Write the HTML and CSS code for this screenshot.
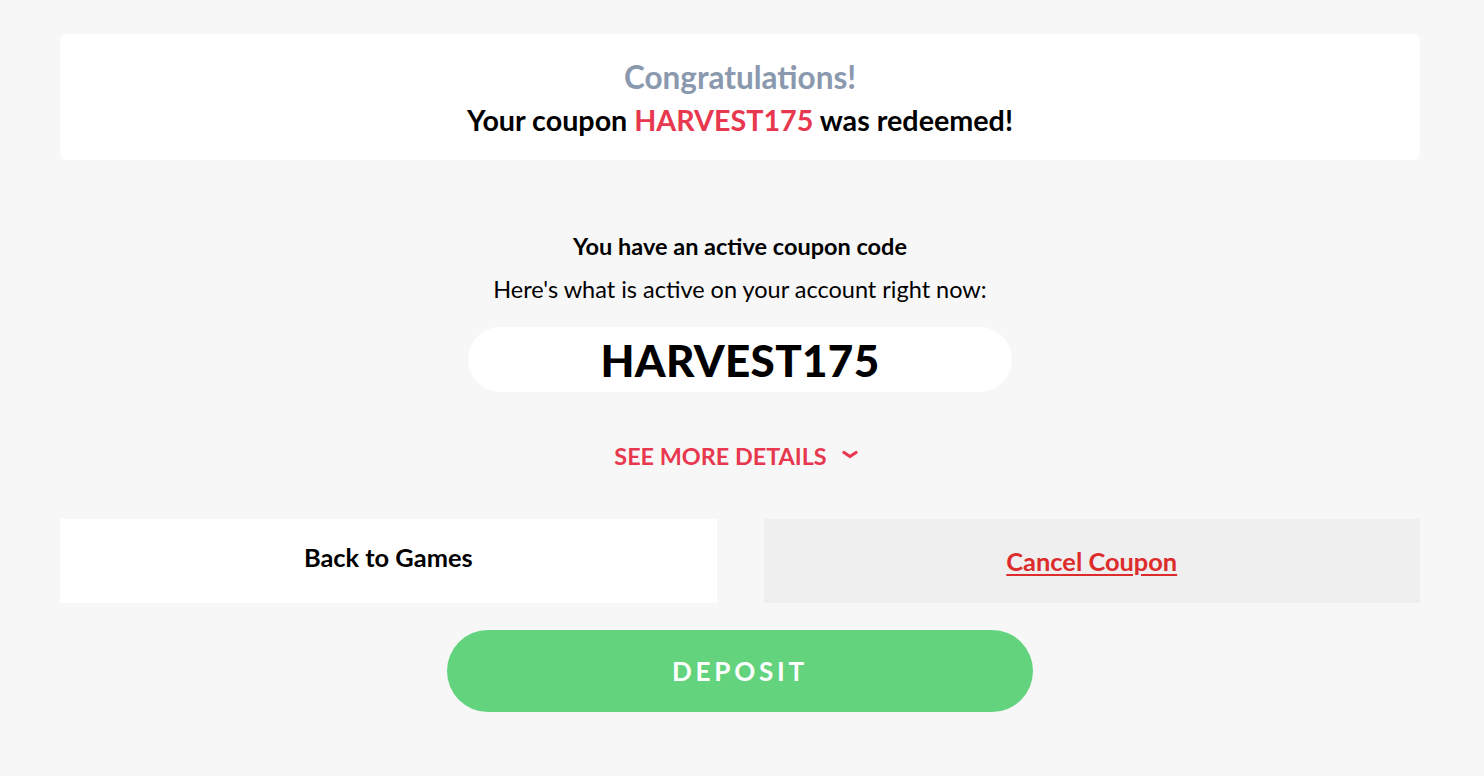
FILE: index.html
```html
<!DOCTYPE html>
<html>
<head>
<meta charset="utf-8">
<link rel="stylesheet" href="styles.css">
</head>
<body>
<div class="page">
  <div class="banner">
    <div class="congrats">Congratulations!</div>
    <div class="redeemed">Your coupon <span class="code-red">HARVEST175</span> was redeemed!</div>
  </div>
  <div class="active">
    <div class="active-title">You have an active coupon code</div>
    <div class="active-sub">Here's what is active on your account right now:</div>
    <div class="pill">HARVEST175</div>
    <div class="details">SEE MORE DETAILS
      <svg class="chev" width="16" height="10" viewBox="0 0 16 10"><path d="M2 2.5 L8 6.5 L14 2.5" fill="none" stroke="#e8384f" stroke-width="3.2" stroke-linecap="round" stroke-linejoin="round"/></svg>
    </div>
  </div>
  <div class="actions">
    <div class="btn back">Back to Games</div>
    <div class="btn cancel"><a href="#">Cancel Coupon</a></div>
  </div>
  <div class="deposit-row">
    <div class="deposit">DEPOSIT</div>
  </div>
</div>
</body>
</html>
```
FILE: styles.css
```css
html, body {
  margin: 0;
  padding: 0;
  background: #f7f7f7;
  font-family: Lato, "Liberation Sans", sans-serif;
}
.page {
  padding: 34px 64px 0 60px;
}
.banner {
  background: #fff;
  border-radius: 6px;
  height: 126px;
  box-sizing: border-box;
  padding-top: 22px;
  text-align: center;
}
.congrats {
  color: #8a99ae;
  font-weight: 700;
  font-size: 31.5px;
  line-height: 42px;
}
.redeemed {
  color: #000;
  font-weight: 700;
  font-size: 28.7px;
  line-height: 40px;
  margin-top: 2px;
}
.code-red {
  color: #e8384f;
}
.active {
  display: flex;
  flex-direction: column;
  align-items: center;
  padding-top: 71px;
}
.active-title {
  font-weight: 700;
  font-size: 23.5px;
  line-height: 30px;
  color: #000;
}
.active-sub {
  font-size: 23.5px;
  line-height: 30px;
  margin-top: 13px;
  color: #000;
}
.pill {
  margin-top: 23px;
  width: 544px;
  height: 65px;
  background: #fff;
  border-radius: 33px;
  display: flex;
  align-items: center;
  justify-content: center;
  font-weight: 900;
  font-size: 44px;
  color: #000;
  letter-spacing: 0.3px;
}
.details {
  margin-top: 49px;
  color: #e8384f;
  font-weight: 700;
  font-size: 23.4px;
  line-height: 30px;
  display: flex;
  align-items: center;
  gap: 15px;
  margin-right: 8px;
}
.chev {
  margin-top: -2px;
}
.actions {
  display: flex;
  gap: 47px;
  margin-top: 48px;
}
.btn {
  flex: 1;
  height: 84px;
  display: flex;
  align-items: center;
  justify-content: center;
  font-weight: 700;
  font-size: 25.4px;
}
.back {
  background: #fff;
  color: #000;
  padding-bottom: 8px;
  box-sizing: border-box;
}
.cancel {
  background: #efefef;
}
.cancel a {
  color: #dc2c2c;
  text-decoration: underline;
  text-decoration-thickness: 2px;
  text-underline-offset: 3px;
}
.deposit-row {
  display: flex;
  justify-content: center;
  margin-top: 27px;
}
.deposit {
  width: 586px;
  height: 82px;
  border-radius: 41px;
  background: #63d37e;
  color: #fff;
  font-weight: 700;
  font-size: 26px;
  letter-spacing: 3.8px;
  display: flex;
  align-items: center;
  justify-content: center;
}
```
